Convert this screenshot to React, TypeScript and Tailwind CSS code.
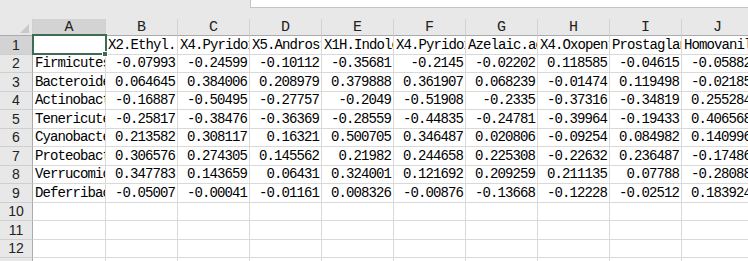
const cols = ['A', 'B', 'C', 'D', 'E', 'F', 'G', 'H', 'I', 'J'];

const header = [
  '',
  'X2.Ethyl.',
  'X4.Pyridoxic.acid',
  'X5.Androstenediol',
  'X1H.Indole.3.acetic',
  'X4.Pyridoxic.acid.1',
  'Azelaic.acid',
  'X4.Oxopentanoate',
  'Prostaglandin.E2',
  'Homovanillic.acid',
];

const rows: [string, string[]][] = [
  ['Firmicutes', ['-0.07993', '-0.24599', '-0.10112', '-0.35681', '-0.2145', '-0.02202', '0.118585', '-0.04615', '-0.05882']],
  ['Bacteroidetes', ['0.064645', '0.384006', '0.208979', '0.379888', '0.361907', '0.068239', '-0.01474', '0.119498', '-0.02185']],
  ['Actinobacteria', ['-0.16887', '-0.50495', '-0.27757', '-0.2049', '-0.51908', '-0.2335', '-0.37316', '-0.34819', '0.255284']],
  ['Tenericutes', ['-0.25817', '-0.38476', '-0.36369', '-0.28559', '-0.44835', '-0.24781', '-0.39964', '-0.19433', '0.406568']],
  ['Cyanobacteria', ['0.213582', '0.308117', '0.16321', '0.500705', '0.346487', '0.020806', '-0.09254', '0.084982', '0.140996']],
  ['Proteobacteria', ['0.306576', '0.274305', '0.145562', '0.21982', '0.244658', '0.225308', '-0.22632', '0.236487', '-0.17486']],
  ['Verrucomicrobia', ['0.347783', '0.143659', '0.06431', '0.324001', '0.121692', '0.209259', '0.211135', '0.07788', '-0.28088']],
  ['Deferribacteres', ['-0.05007', '-0.00041', '-0.01161', '0.008326', '-0.00876', '-0.13668', '-0.12228', '-0.02512', '0.183924']],
];

const cellFont = "font-['Liberation_Mono',monospace] text-[14px] tracking-[-0.9px] text-black";

const RowHead = ({ n, active }: { n: number; active?: boolean }) => (
  <div
    className={`flex items-center justify-center border-r border-b border-r-[#ababab] border-b-[#cfcfcf] pt-[1px] font-['Liberation_Sans',Arial,sans-serif] text-[14px] text-[#222] ${
      active ? 'bg-[#d3d3d3]' : 'bg-[#e8e8e8]'
    }`}
  >
    {n}
  </div>
);

const Cell = ({ text, right }: { text?: string; right?: boolean }) => (
  <div
    className={`flex items-center overflow-hidden whitespace-nowrap border-r border-b border-[#d9d9d9] bg-white px-[2px] pt-[1px] ${cellFont} ${
      right ? 'justify-end' : 'justify-start'
    }`}
  >
    {text}
  </div>
);

export default function App() {
  return (
    <div className="h-[261px] w-[748px] overflow-hidden bg-[#e8e8e8]">
      {/* formula bar strip */}
      <div className="flex h-[19px]">
        <div className="w-[250px]" />
        <div className="h-[8px] flex-1 border-b border-l border-[#c4c4c4] bg-white" />
      </div>

      <div className="grid grid-cols-[33px_73px_repeat(9,72px)] grid-rows-[17px_repeat(13,18.5px)]">
        {/* corner */}
        <div className="relative border-r border-b border-r-[#cfcfcf] border-b-[#ababab] bg-[#e8e8e8]">
          <div className="absolute right-[3px] bottom-[2px] h-0 w-0 border-t-[9px] border-l-[9px] border-t-transparent border-l-transparent border-b-0 border-r-[9px] border-r-[#c9c9c9]" />
        </div>
        {cols.map((c, i) => (
          <div
            key={c}
            className={`flex items-center justify-center border-r border-b border-r-[#d2d2d2] border-b-[#ababab] pt-[2px] font-['Liberation_Mono',monospace] text-[15px] text-[#222] ${
              i === 0 ? 'bg-[#d3d3d3]' : 'bg-[#e8e8e8]'
            }`}
          >
            {c}
          </div>
        ))}

        {/* row 1 */}
        <RowHead n={1} active />
        <div className="relative border-r border-b border-[#d9d9d9] bg-white">
          <div className="absolute -top-[2px] -left-[1px] h-[21px] w-[75px] border-2 border-[#3d6b53]" />
          <div className="absolute -right-[3px] -bottom-[3px] h-[6px] w-[6px] border border-white bg-[#3d6b53]" />
        </div>
        {header.slice(1).map((h, i) => (
          <Cell key={i} text={h} />
        ))}

        {rows.map(([name, vals], r) => (
          <>
            <RowHead key={`h${r}`} n={r + 2} />
            <Cell key={`n${r}`} text={name} />
            {vals.map((v, i) => (
              <Cell key={`${r}-${i}`} text={v} right />
            ))}
          </>
        ))}

        {[10, 11, 12, 13].map((n) => (
          <>
            <RowHead key={`e${n}`} n={n} />
            {cols.map((c) => (
              <Cell key={`${n}${c}`} />
            ))}
          </>
        ))}
      </div>
    </div>
  );
}
